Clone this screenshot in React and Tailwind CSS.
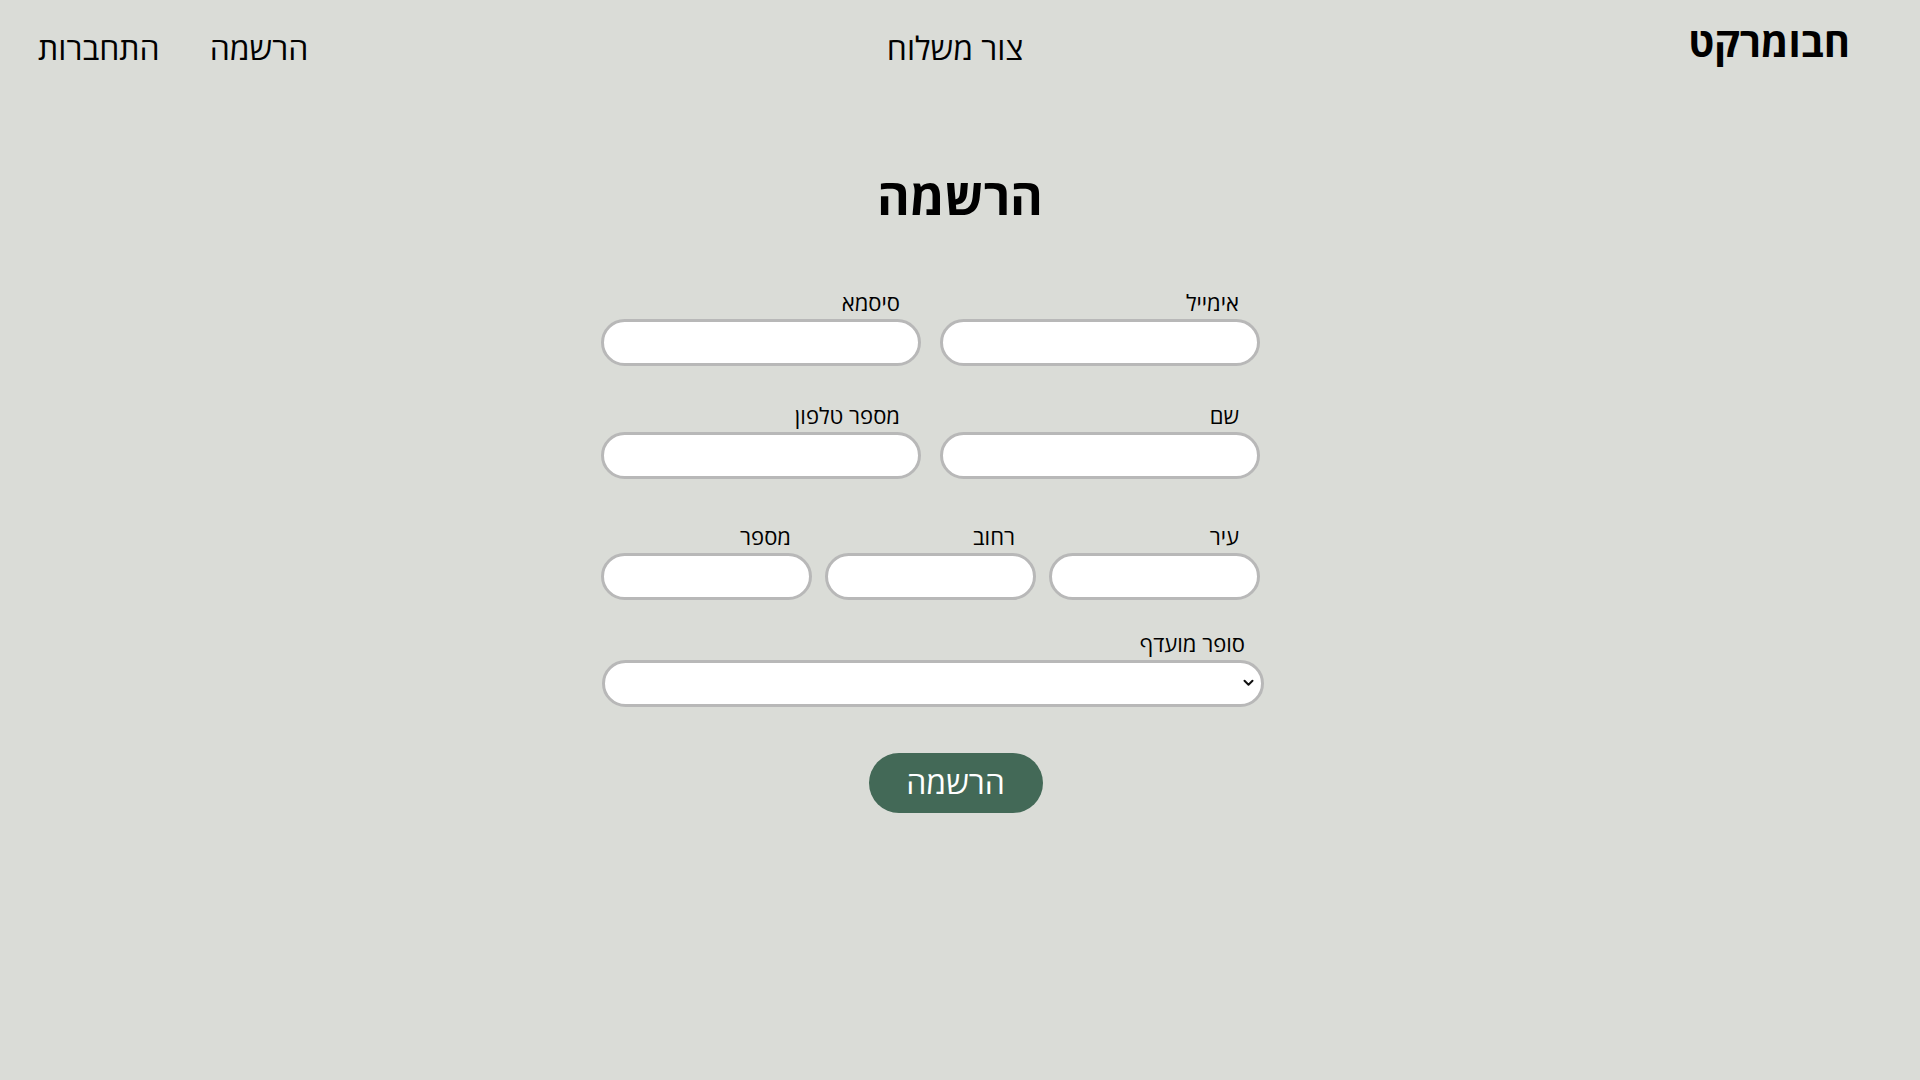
import React from 'react';

function Field({ label, type = 'text' }) {
  return (
    <label className="flex flex-col">
      <span className="pr-[21px] mb-[3px] text-[22px] leading-[28px]">{label}</span>
      <input
        type={type}
        className="w-full h-[47px] rounded-full border-[3px] border-[#b8b8b8] bg-white px-4 outline-none"
      />
    </label>
  );
}

export default function App() {
  return (
    <div
      dir="rtl"
      className="min-h-screen bg-[#dadcd7] text-black font-['Open_Sans',sans-serif] leading-[normal]"
    >
      <header className="grid grid-cols-[1fr_auto_1fr] items-start pr-[70px] pl-[38px]">
        <a href="#" className="justify-self-start mt-[14px] text-[40px] font-bold">
          חבומרקט
        </a>
        <a href="#" className="mt-[26px] pl-[22px] text-[32px]">
          צור משלוח
        </a>
        <nav className="justify-self-end mt-[26px] flex gap-[50px] text-[32px]">
          <a href="#">הרשמה</a>
          <a href="#">התחברות</a>
        </nav>
      </header>

      <main>
        <h1 className="mt-[93px] text-center text-[50px] font-bold leading-[normal]">הרשמה</h1>

        <form className="mt-[58px]" onSubmit={(e) => e.preventDefault()}>
          <div className="ml-[601px] mr-auto w-[659px]">
            <div className="grid grid-cols-2 gap-[19px]">
              <Field label="אימייל" type="email" />
              <Field label="סיסמא" type="password" />
            </div>
            <div className="mt-[35px] grid grid-cols-2 gap-[19px]">
              <Field label="שם" />
              <Field label="מספר טלפון" type="tel" />
            </div>
            <div className="mt-[43px] grid grid-cols-3 gap-[13px]">
              <Field label="עיר" />
              <Field label="רחוב" />
              <Field label="מספר" />
            </div>
            <label className="mt-[29px] ml-[1px] mr-[-4px] flex flex-col">
              <span className="pr-[19px] mb-[3px] text-[22px] leading-[28px]">סופר מועדף</span>
              <div className="relative">
                <select className="w-full h-[47px] appearance-none rounded-full border-[3px] border-[#b8b8b8] bg-white px-4 outline-none">
                  <option></option>
                </select>
                <svg
                  className="pointer-events-none absolute right-[10px] top-[19px]"
                  width="11"
                  height="8"
                  viewBox="0 0 11 8"
                  fill="none"
                >
                  <path d="M1.5 1.8 5.5 5.8 9.5 1.8" stroke="#111" strokeWidth="2" strokeLinecap="round" strokeLinejoin="round" />
                </svg>
              </div>
            </label>
          </div>
          <div className="mt-[46px] flex justify-center pr-[9px]">
            <button
              type="submit"
              className="h-[60px] w-[174px] rounded-full bg-[#436957] pb-1 text-[32px] text-white"
            >
              הרשמה
            </button>
          </div>
        </form>
      </main>
    </div>
  );
}
